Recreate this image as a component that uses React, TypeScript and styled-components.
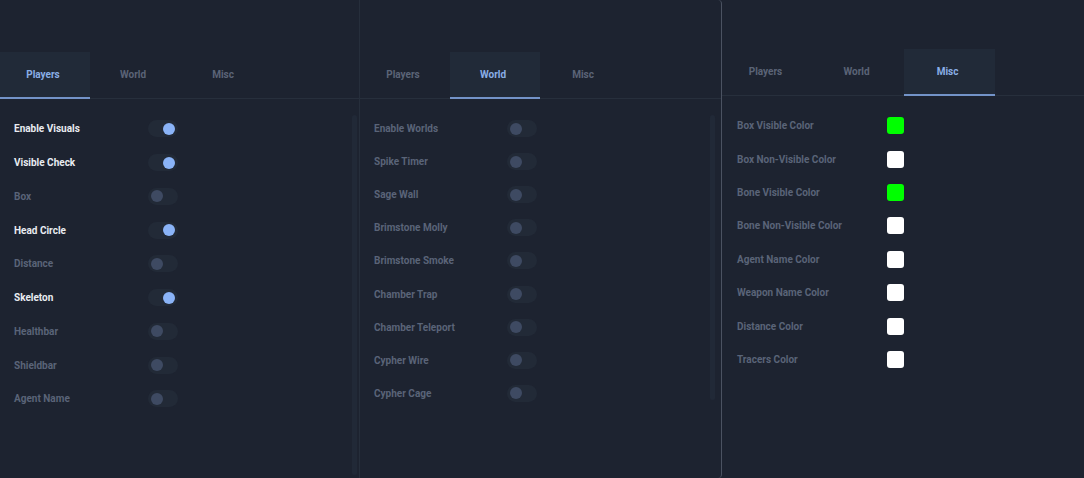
import styled, { createGlobalStyle } from "styled-components";

const GlobalStyle = createGlobalStyle`
  html, body {
    margin: 0;
    padding: 0;
    background: #1d2330;
  }
  body {
    font-family: Roboto, "Liberation Sans", sans-serif;
  }
`;

type ToggleItem = { label: string; on: boolean };
type ColorItem = { label: string; color: string };

const players: ToggleItem[] = [
  { label: "Enable Visuals", on: true },
  { label: "Visible Check", on: true },
  { label: "Box", on: false },
  { label: "Head Circle", on: true },
  { label: "Distance", on: false },
  { label: "Skeleton", on: true },
  { label: "Healthbar", on: false },
  { label: "Shieldbar", on: false },
  { label: "Agent Name", on: false },
];

const world: ToggleItem[] = [
  { label: "Enable Worlds", on: false },
  { label: "Spike Timer", on: false },
  { label: "Sage Wall", on: false },
  { label: "Brimstone Molly", on: false },
  { label: "Brimstone Smoke", on: false },
  { label: "Chamber Trap", on: false },
  { label: "Chamber Teleport", on: false },
  { label: "Cypher Wire", on: false },
  { label: "Cypher Cage", on: false },
];

const misc: ColorItem[] = [
  { label: "Box Visible Color", color: "#00ff00" },
  { label: "Box Non-Visible Color", color: "#ffffff" },
  { label: "Bone Visible Color", color: "#00ff00" },
  { label: "Bone Non-Visible Color", color: "#ffffff" },
  { label: "Agent Name Color", color: "#ffffff" },
  { label: "Weapon Name Color", color: "#ffffff" },
  { label: "Distance Color", color: "#ffffff" },
  { label: "Tracers Color", color: "#ffffff" },
];

const TABS = ["Players", "World", "Misc"];

const Tabs = ({ active, width }: { active: number; width: number }) => (
  <TabBar>
    {TABS.map((t, i) => (
      <Tab key={t} $active={i === active} $w={width}>
        {t}
      </Tab>
    ))}
  </TabBar>
);

const App = () => {
  return (
    <>
      <GlobalStyle />
      <Screen>
        <Panel $width={360} $top={52} $edge="dim">
          <Tabs active={0} width={90} />
          <Body $pad={13}>
            <List $left={14} $labelWidth={134}>
              {players.map((p) => (
                <Row key={p.label} $h={33.75}>
                  <Label $on={p.on}>{p.label}</Label>
                  <Switch>
                    <Knob $on={p.on} />
                  </Switch>
                </Row>
              ))}
            </List>
            <Track $height={360} $right={2} />
          </Body>
        </Panel>

        <Panel $width={362} $top={52} $edge="bright">
          <Tabs active={1} width={90} />
          <Body $pad={13}>
            <List $left={14} $labelWidth={133}>
              {world.map((p) => (
                <Row key={p.label} $h={33.1}>
                  <Label $on={false}>{p.label}</Label>
                  <Switch>
                    <Knob $on={p.on} />
                  </Switch>
                </Row>
              ))}
            </List>
            <Track $height={285} $right={6} />
          </Body>
        </Panel>

        <Panel $width={362} $top={49} $edge="none">
          <Tabs active={2} width={91} />
          <Body $pad={13}>
            <List $left={15} $labelWidth={150}>
              {misc.map((c) => (
                <Row key={c.label} $h={33.4}>
                  <Label $on={false}>{c.label}</Label>
                  <Swatch $color={c.color} />
                </Row>
              ))}
            </List>
          </Body>
        </Panel>
      </Screen>
    </>
  );
};

export default App;

const Screen = styled.div`
  display: flex;
  width: 1084px;
  height: 478px;
  overflow: hidden;
  background: #1d2330;
`;

const Panel = styled.div<{ $width: number; $top: number; $edge: "dim" | "bright" | "none" }>`
  flex: ${({ $edge }) => ($edge === "none" ? "1 1 auto" : "0 0 auto")};
  width: ${({ $width }) => $width}px;
  height: 100%;
  box-sizing: border-box;
  padding-top: ${({ $top }) => $top}px;
  display: flex;
  flex-direction: column;
  overflow: hidden;
  border-right: ${({ $edge }) =>
    $edge === "dim" ? "1px solid #262e3b" : $edge === "bright" ? "1px solid #4b5261" : "none"};
  border-radius: ${({ $edge }) => ($edge === "bright" ? "0 4px 4px 0" : "0")};
`;

const TabBar = styled.div`
  flex: 0 0 auto;
  display: flex;
  height: 46px;
  border-bottom: 1px solid #272f3c;
`;

const Tab = styled.div<{ $active: boolean; $w: number }>`
  width: ${({ $w }) => $w}px;
  box-sizing: border-box;
  display: flex;
  align-items: center;
  justify-content: center;
  padding-right: 4px;
  font-size: 10px;
  font-weight: 700;
  color: ${({ $active }) => ($active ? "#8aaee6" : "#5b6477")};
  background: ${({ $active }) => ($active ? "#212a38" : "transparent")};
  border-bottom: 2px solid ${({ $active }) => ($active ? "#7393c8" : "transparent")};
  margin-bottom: -1px;
`;

const Body = styled.div<{ $pad: number }>`
  flex: 0 0 auto;
  display: flex;
  align-items: flex-start;
  padding-top: ${({ $pad }) => $pad}px;
`;

const List = styled.div<{ $labelWidth: number; $left: number }>`
  flex: 1 1 auto;
  display: grid;
  grid-template-columns: ${({ $labelWidth }) => $labelWidth}px auto;
  padding-left: ${({ $left }) => $left}px;
`;

const Row = styled.div<{ $h: number }>`
  display: contents;
  & > * {
    height: ${({ $h }) => $h}px;
  }
`;

const Label = styled.div<{ $on: boolean }>`
  display: flex;
  align-items: center;
  font-size: 10px;
  font-weight: 700;
  color: ${({ $on }) => ($on ? "#e9ecf1" : "#5a6478")};
`;

const Switch = styled.div`
  display: flex;
  align-items: center;
  justify-self: start;
  position: relative;
  width: 30px;
  &::before {
    content: "";
    position: absolute;
    left: 0;
    top: 50%;
    width: 30px;
    height: 17px;
    margin-top: -8.5px;
    border-radius: 9px;
    background: #222a37;
  }
`;

const Knob = styled.span<{ $on: boolean }>`
  position: relative;
  width: 12px;
  height: 12px;
  border-radius: 50%;
  margin-left: ${({ $on }) => ($on ? "15px" : "3px")};
  background: ${({ $on }) => ($on ? "#8ab3f7" : "#3e4a62")};
`;

const Swatch = styled.div<{ $color: string }>`
  align-self: center;
  justify-self: start;
  width: 17px;
  height: 17px !important;
  border-radius: 3px;
  background: ${({ $color }) => $color};
`;

const Track = styled.div<{ $height: number; $right: number }>`
  flex: 0 0 auto;
  width: 5px;
  height: ${({ $height }) => $height}px;
  margin-top: 3px;
  margin-right: ${({ $right }) => $right}px;
  border-radius: 3px;
  background: #212937;
`;
